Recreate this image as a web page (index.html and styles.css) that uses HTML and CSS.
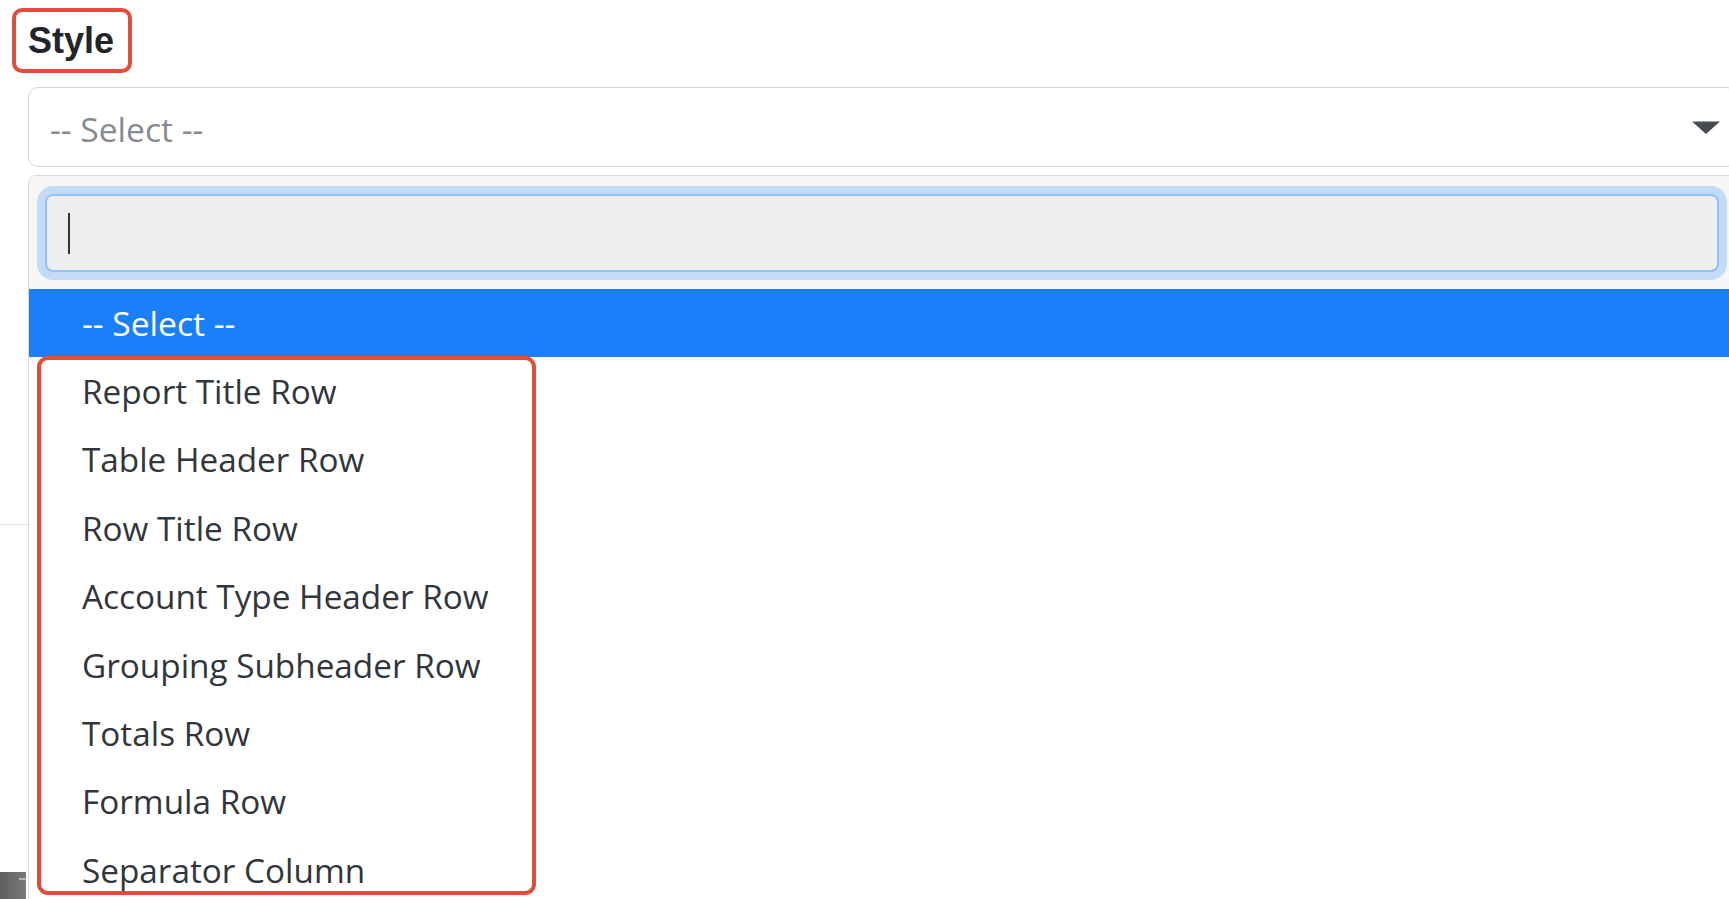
FILE: index.html
```html
<!DOCTYPE html>
<html lang="en">
<head>
<meta charset="utf-8">
<title>Style select</title>
<link rel="stylesheet" href="styles.css">
</head>
<body>
<div class="page">
  <div class="field">
    <label class="field-label">Style</label>
    <div class="select-wrap">
      <div class="select">
        <span class="select-value">-- Select --</span>
        <svg class="chevron" width="28" height="13" viewBox="0 0 28 13" aria-hidden="true"><path d="M0 0.5H28L14.6 12.6Q14 13.1 13.4 12.6Z"/></svg>
      </div>
      <div class="dropdown">
        <div class="search-area">
          <div class="search"><span class="caret"></span></div>
        </div>
        <div class="option highlighted">-- Select --</div>
        <ul class="options">
          <li class="option">Report Title Row</li>
          <li class="option">Table Header Row</li>
          <li class="option">Row Title Row</li>
          <li class="option">Account Type Header Row</li>
          <li class="option">Grouping Subheader Row</li>
          <li class="option">Totals Row</li>
          <li class="option">Formula Row</li>
          <li class="option">Separator Column</li>
        </ul>
      </div>
    </div>
  </div>
  <div class="behind">
    <div class="section"></div>
    <div class="bar"><span class="bar-dash"></span></div>
  </div>
</div>
</body>
</html>
```
FILE: styles.css
```css
html, body {
  margin: 0;
  padding: 0;
  overflow: hidden;
  background: #ffffff;
}

.page {
  font-family: "Open Sans", "Noto Sans", sans-serif;
}

.field {
  padding: 8px 0 0 12px;
}

.field-label {
  display: inline-block;
  font-family: "Liberation Sans", Arial, sans-serif;
  font-weight: bold;
  font-size: 36px;
  line-height: 41px;
  color: #222529;
  padding: 8px 14px 8px 12px;
  border: 4px solid #e24c3b;
  border-radius: 10px;
}

.select-wrap {
  position: relative;
  margin: 14px 0 0 16px;
  width: 1709px;
}

.select {
  box-sizing: border-box;
  height: 80px;
  border: 1px solid #d3d6da;
  border-radius: 10px;
  padding: 0 17px 0 21px;
  display: flex;
  align-items: center;
  justify-content: space-between;
  background: #ffffff;
}

.select-value {
  font-size: 33.6px;
  color: #858b92;
  margin-top: 3px;
}

.chevron {
  fill: #464c53;
  flex: none;
  margin-right: -1px;
}

.dropdown {
  position: absolute;
  top: calc(100% + 8px);
  left: 0;
  width: 100%;
  box-sizing: border-box;
  border: 1px solid #dadada;
  border-bottom: none;
  border-radius: 8px 8px 0 0;
  background: #ffffff;
  overflow: hidden;
}

.search-area {
  background: #f6f6f6;
  padding: 18px 17px 17px 16px;
}

.search {
  box-sizing: border-box;
  height: 78px;
  border: 2px solid #93c0f6;
  border-radius: 8px;
  background: #eeeeee;
  box-shadow: 0 0 0 8px #c4dbf8;
  display: flex;
  align-items: center;
}

.caret {
  width: 2px;
  height: 41px;
  margin-left: 21px;
  background: #2f3337;
}

.option {
  font-size: 33.3px;
  line-height: 68.4px;
  padding-left: 53px;
  color: #30363c;
  white-space: nowrap;
}

.option.highlighted {
  font-size: 33.6px;
  line-height: 68px;
  background: #1b7ffa;
  color: #ffffff;
}

.options {
  list-style: none;
  margin: 0;
  padding: 0;
  position: relative;
}

.options::after {
  content: "";
  position: absolute;
  top: -1px;
  left: 8px;
  width: 499px;
  height: 539px;
  box-sizing: border-box;
  border: 4px solid #e24c3b;
  border-radius: 11px;
  pointer-events: none;
}

.behind .section {
  height: 357px;
  border-bottom: 1px solid #e4e4e4;
}

.behind .bar {
  margin-top: 347px;
  width: 26px;
  height: 27px;
  background: linear-gradient(90deg, #5e5e5e, #7a7a7a);
  display: flex;
  justify-content: flex-end;
  padding-top: 6px;
  box-sizing: border-box;
}

.bar-dash {
  width: 7px;
  height: 2px;
  background: #b8b8b8;
}
```
